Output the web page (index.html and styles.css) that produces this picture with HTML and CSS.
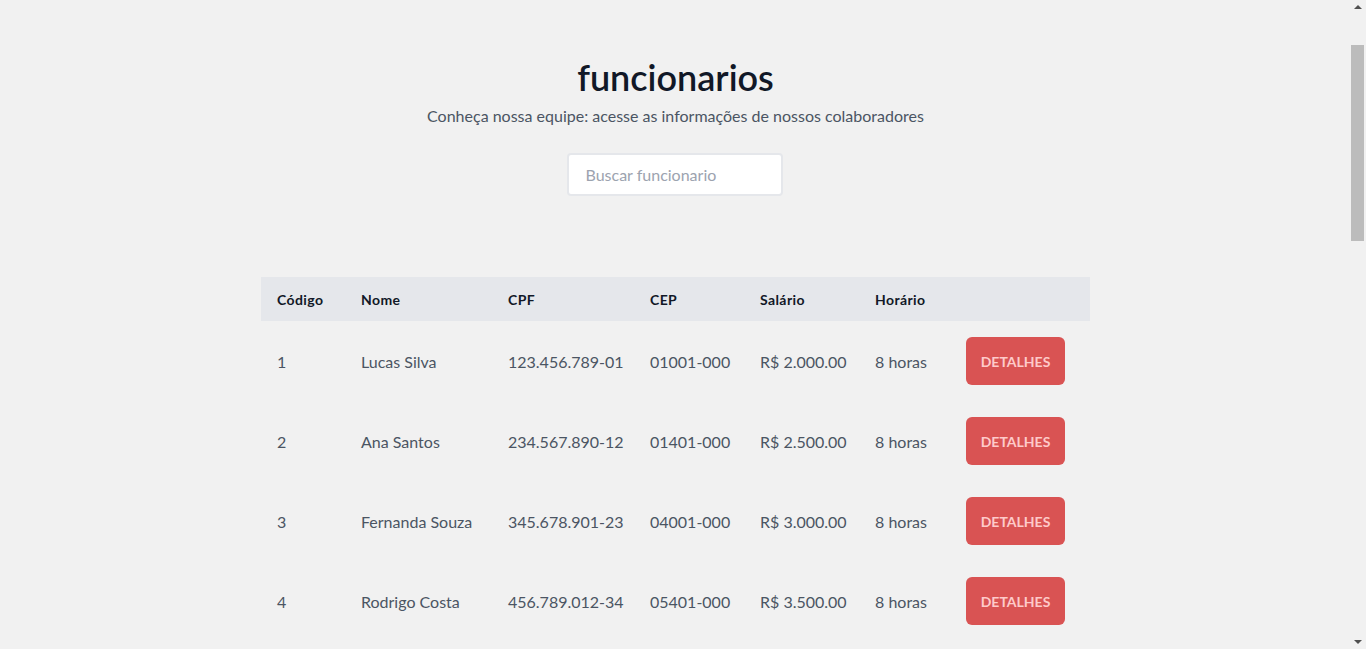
FILE: index.html
```html
<!DOCTYPE html>
<html lang="pt-BR">
<head>
<meta charset="utf-8">
<title>funcionarios</title>
<link rel="stylesheet" href="styles.css">
</head>
<body>
<main class="page">
  <header class="intro">
    <h1 class="title">funcionarios</h1>
    <p class="subtitle">Conheça nossa equipe: acesse as informações de nossos colaboradores</p>
    <input class="search" type="text" placeholder="Buscar funcionario">
  </header>
  <table class="staff">
    <colgroup>
      <col class="c1"><col class="c2"><col class="c3"><col class="c4"><col class="c5"><col class="c6"><col class="c7">
    </colgroup>
    <thead>
      <tr><th>Código</th><th>Nome</th><th>CPF</th><th>CEP</th><th>Salário</th><th>Horário</th><th></th></tr>
    </thead>
    <tbody>
      <tr><td>1</td><td>Lucas Silva</td><td>123.456.789-01</td><td>01001-000</td><td>R$ 2.000.00</td><td>8 horas</td><td><button class="btn">DETALHES</button></td></tr>
      <tr><td>2</td><td>Ana Santos</td><td>234.567.890-12</td><td>01401-000</td><td>R$ 2.500.00</td><td>8 horas</td><td><button class="btn">DETALHES</button></td></tr>
      <tr><td>3</td><td>Fernanda Souza</td><td>345.678.901-23</td><td>04001-000</td><td>R$ 3.000.00</td><td>8 horas</td><td><button class="btn">DETALHES</button></td></tr>
      <tr><td>4</td><td>Rodrigo Costa</td><td>456.789.012-34</td><td>05401-000</td><td>R$ 3.500.00</td><td>8 horas</td><td><button class="btn">DETALHES</button></td></tr>
    </tbody>
  </table>
</main>
<div class="scrollbar" aria-hidden="true">
  <span class="arrow up"></span>
  <span class="thumb"></span>
  <span class="arrow down"></span>
</div>
</body>
</html>
```
FILE: styles.css
```css
html, body {
  margin: 0;
  padding: 0;
  background: #f1f1f1;
}
body {
  font-family: Lato, "Open Sans", "Noto Sans", sans-serif;
  color: #4b5563;
}
.page {
  display: flex;
  flex-direction: column;
  align-items: center;
  margin-right: 15px;
  padding: 55px 0 0;
}
.intro {
  display: flex;
  flex-direction: column;
  align-items: center;
}
.title {
  margin: 0;
  font-size: 36px;
  line-height: 44px;
  font-weight: 600;
  color: #111827;
}
.subtitle {
  margin: 5px 0 0;
  font-size: 16px;
  line-height: 24px;
  color: #4b5563;
}
.search {
  margin-top: 25px;
  box-sizing: border-box;
  width: 216px;
  height: 43px;
  padding: 0 16px;
  border: 2px solid #e5e7eb;
  border-radius: 4px;
  background: #fff;
  font-family: inherit;
  font-size: 16px;
  color: #374151;
  outline: none;
}
.search::placeholder {
  color: #9ca3af;
}
.staff {
  margin-top: 81px;
  width: 829px;
  table-layout: fixed;
  border-collapse: collapse;
}
.c1 { width: 84px; }
.c2 { width: 147px; }
.c3 { width: 142px; }
.c4 { width: 110px; }
.c5 { width: 115px; }
.c6 { width: 91px; }
.c7 { width: 140px; }
.staff th {
  background: #e5e7eb;
  height: 44px;
  padding: 0 16px;
  text-align: left;
  font-size: 14px;
  font-weight: 700;
  letter-spacing: 0.4px;
  color: #111827;
}
.staff td {
  height: 80px;
  padding: 0 16px;
  font-size: 16px;
  color: #4b5563;
  white-space: nowrap;
}
.btn {
  width: 99px;
  height: 48px;
  border: 0;
  border-radius: 6px;
  background: #d95353;
  color: #fecaca;
  font-family: inherit;
  font-size: 14px;
  font-weight: 700;
  cursor: pointer;
}
.scrollbar {
  position: fixed;
  top: 0;
  right: 0;
  width: 15px;
  height: 100%;
  background: #f1f1f1;
}
.thumb {
  position: absolute;
  top: 45px;
  left: 0;
  width: 13px;
  height: 196px;
  background: #bcbcbc;
}
.arrow {
  position: absolute;
  left: 3px;
  width: 0;
  height: 0;
  border-left: 4px solid transparent;
  border-right: 4px solid transparent;
}
.arrow.up {
  top: 5px;
  border-bottom: 4px solid #505050;
}
.arrow.down {
  bottom: 5px;
  border-top: 4px solid #505050;
}
```
